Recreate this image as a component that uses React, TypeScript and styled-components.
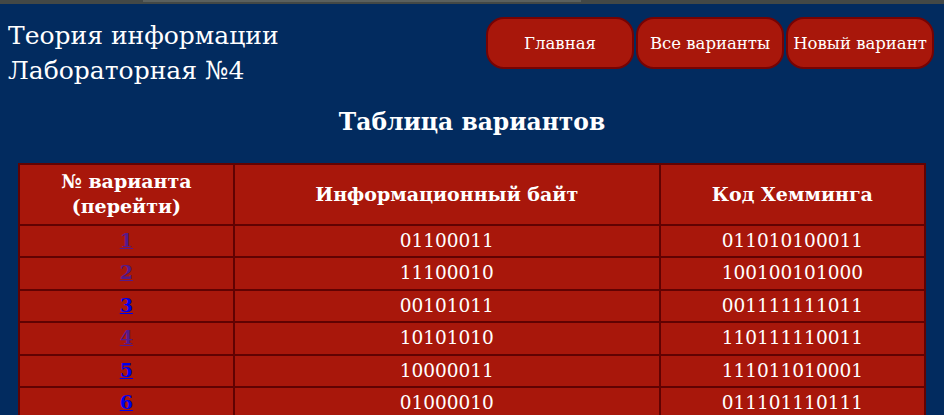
import React from "react";
import styled, { createGlobalStyle } from "styled-components";

const Global = createGlobalStyle`
  html, body { margin: 0; padding: 0; background: #022b5f; }
  body { font-family: "DejaVu Serif", "Liberation Serif", serif; color: #ffffff; }
`;

const TopStrip = styled.div`
  height: 4px;
  background: #434846;
  display: flex;
`;

const StripThumb = styled.div`
  margin-left: 143px;
  width: 438px;
  height: 2px;
  background: #5a605e;
`;

const Header = styled.header`
  display: flex;
  justify-content: space-between;
  align-items: flex-start;
  padding: 13px 10px 0 8px;
`;

const Title = styled.div`
  font-size: 25px;
  line-height: 35px;
  margin-top: 1px;
`;

const Nav = styled.nav`
  display: flex;
  gap: 2px;
`;

const NavButton = styled.a`
  display: flex;
  align-items: center;
  justify-content: center;
  width: 148px;
  height: 52px;
  box-sizing: border-box;
  background: #a8170b;
  border: 2px solid #760303;
  border-radius: 18px;
  color: #ffffff;
  font-size: 16.5px;
  text-decoration: none;
  white-space: nowrap;
`;

const Heading = styled.h2`
  margin: 20px 0 27px;
  text-align: center;
  font-size: 23.4px;
  line-height: 28px;
  font-weight: bold;
`;

const Table = styled.table`
  margin: 0 18px;
  width: calc(100% - 36px);
  border-collapse: collapse;
  background: #a8170b;
  border: 2px solid #610202;
`;

const Th = styled.th<{ $w: number }>`
  width: ${(p) => p.$w}px;
  border: 2px solid #610202;
  font-size: 19px;
  line-height: 25px;
  padding: 4px 2px 5px;
  font-weight: bold;
`;

const Td = styled.td`
  border: 2px solid #610202;
  text-align: center;
  font-size: 18.5px;
  line-height: 22.4px;
  padding: 4px 4px 4px;
`;

const NumLink = styled.a<{ $visited: boolean }>`
  color: ${(p) => (p.$visited ? "#551a8b" : "#0000ee")};
  font-weight: bold;
  font-size: 19px;
  line-height: 1;
  text-decoration: underline;
`;

const rows = [
  { n: 1, b: "01100011", h: "011010100011", v: true },
  { n: 2, b: "11100010", h: "100100101000", v: true },
  { n: 3, b: "00101011", h: "001111111011", v: false },
  { n: 4, b: "10101010", h: "110111110011", v: true },
  { n: 5, b: "10000011", h: "111011010001", v: false },
  { n: 6, b: "01000010", h: "011101110111", v: false },
];

export default function App() {
  return (
    <>
      <Global />
      <TopStrip>
        <StripThumb />
      </TopStrip>
      <Header>
        <Title>
          Теория информации
          <br />
          Лабораторная №4
        </Title>
        <Nav>
          <NavButton href="#">Главная</NavButton>
          <NavButton href="#">Все варианты</NavButton>
          <NavButton href="#">Новый вариант</NavButton>
        </Nav>
      </Header>
      <Heading>Таблица вариантов</Heading>
      <Table>
        <thead>
          <tr>
            <Th $w={212}>
              № варианта
              <br />
              (перейти)
            </Th>
            <Th $w={427}>Информационный байт</Th>
            <Th $w={263}>Код Хемминга</Th>
          </tr>
        </thead>
        <tbody>
          {rows.map((r) => (
            <tr key={r.n}>
              <Td>
                <NumLink href="#" $visited={r.v}>
                  {r.n}
                </NumLink>
              </Td>
              <Td>{r.b}</Td>
              <Td>{r.h}</Td>
            </tr>
          ))}
        </tbody>
      </Table>
    </>
  );
}
